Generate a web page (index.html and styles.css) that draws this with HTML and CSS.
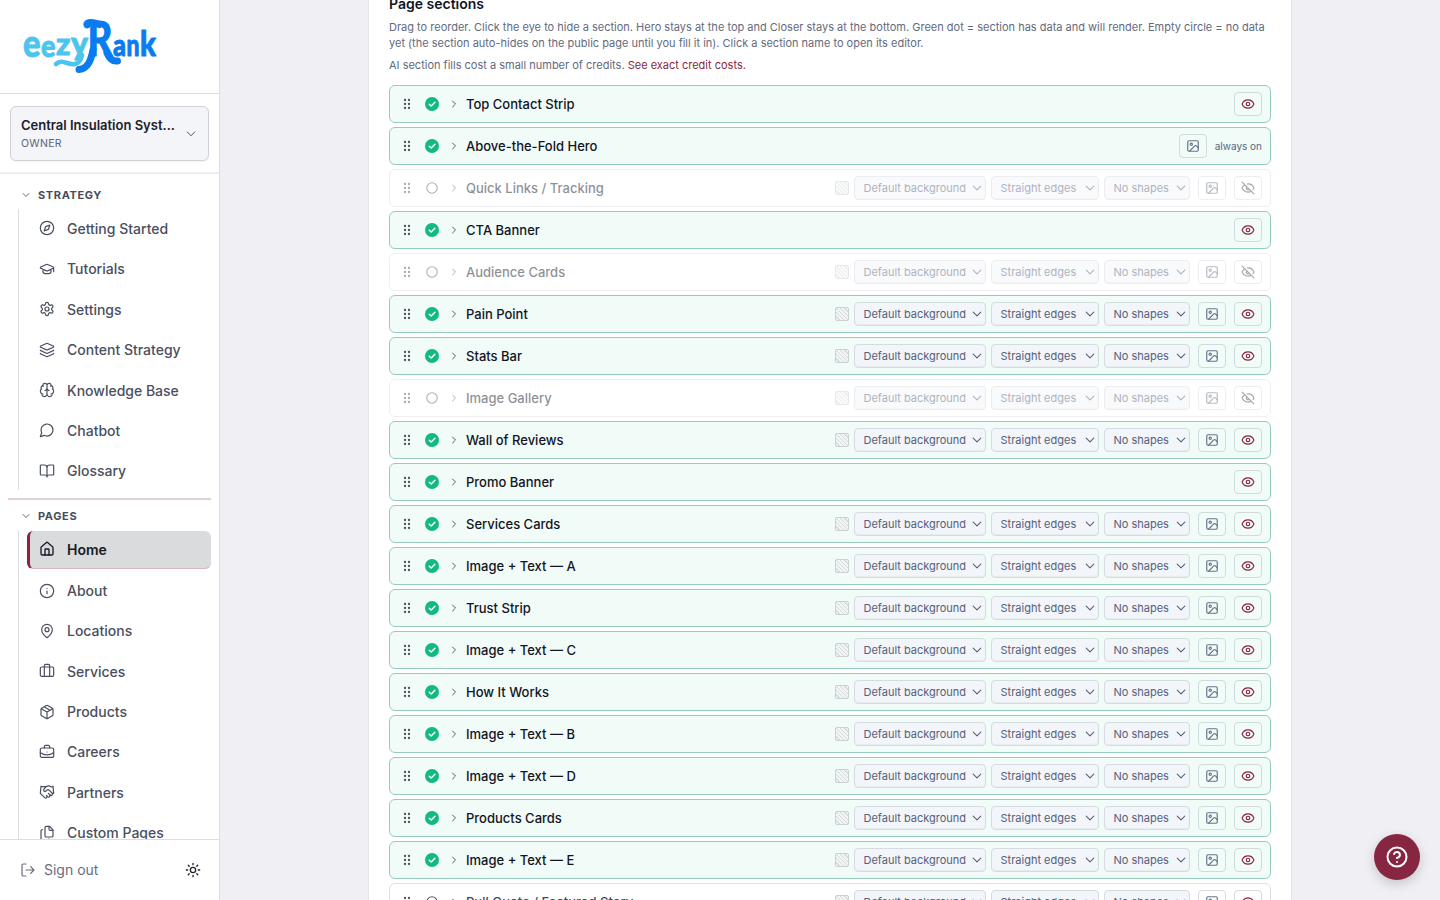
FILE: index.html
```html
<!DOCTYPE html>
<html lang="en">
<head>
<meta charset="utf-8">
<title>eezyRank</title>
<link rel="stylesheet" href="styles.css">
</head>
<body>
<div class="app">
  <aside class="sidebar">
    <div class="brand">
      <svg class="logo" width="140" height="60" viewBox="20 16 140 60" role="img" aria-label="eezyRank">
        <g class="logo-light">
          <text x="23" y="57" font-size="38" textLength="17.500" lengthAdjust="spacingAndGlyphs">e</text>
          <text x="41" y="56.500" font-size="31" textLength="14.500" lengthAdjust="spacingAndGlyphs">e</text>
          <text x="56" y="55" font-size="30" textLength="14.500" lengthAdjust="spacingAndGlyphs">z</text>
          <path class="swoosh-light" d="M56 64C62 58 69 66 75 64C79 63 81 60 82 55"/>
          <text x="71" y="54.500" font-size="33" textLength="17" lengthAdjust="spacingAndGlyphs">y</text>
        </g>
        <g class="logo-dark">
          <path class="swoosh" d="M87 25C86 22 92 21.500 99 24.500"/>
          <path class="swoosh" d="M107 53Q111 62 117.500 61"/>
          <path class="swoosh" d="M93 50C91 60 88 69 79 69.500"/>
          <text x="87.500" y="56" font-size="47" textLength="25" lengthAdjust="spacingAndGlyphs">R</text>
          <text x="113" y="55.500" font-size="30" textLength="13" lengthAdjust="spacingAndGlyphs">a</text>
          <text x="126.500" y="55.500" font-size="30" textLength="13" lengthAdjust="spacingAndGlyphs">n</text>
          <text x="140" y="56" font-size="34" textLength="16" lengthAdjust="spacingAndGlyphs">k</text>
        </g>
      </svg>
    </div>
    <div class="account">
      <div class="account-box">
        <div class="account-text"><div class="account-name">Central Insulation Syst...</div><div class="account-role">OWNER</div></div>
        <svg class="ico" width="12" height="12" viewBox="0 0 24 24"><path d="m4.500 8 7.500 7.500L19.500 8"/></svg>
      </div>
    </div>
    <nav class="nav" id="nav"></nav>
    <div class="foot">
      <svg class="ico thin" width="16" height="16" viewBox="0 0 24 24"><path d="M9 21H5a2 2 0 0 1-2-2V5a2 2 0 0 1 2-2h4M16 17l5-5-5-5M21 12H9"/></svg>
      <span class="signout">Sign out</span>
      <svg class="ico sun" width="16" height="16" viewBox="0 0 24 24"><circle cx="12" cy="12" r="4"/><path d="M12 2v2M12 20v2M4.930 4.930l1.410 1.410M17.660 17.660l1.410 1.410M2 12h2M20 12h2M6.340 17.660l-1.410 1.410M19.070 4.930l-1.410 1.410"/></svg>
    </div>
  </aside>
  <main class="main">
    <section class="card">
      <h2 class="title">Page sections</h2>
      <p class="help">Drag to reorder. Click the eye to hide a section. Hero stays at the top and Closer stays at the bottom. Green dot = section has data and will render. Empty circle = no data<br>yet (the section auto-hides on the public page until you fill it in). Click a section name to open its editor.</p>
      <p class="help credits">AI section fills cost a small number of credits. <a class="link">See exact credit costs.</a></p>
      <div class="rows" id="rows"></div>
    </section>
  </main>
  <button class="fab" aria-label="Help"><svg class="ico" width="24" height="24" viewBox="0 0 24 24"><circle cx="12" cy="12" r="9.500"/><path d="M9.090 9a3 3 0 0 1 5.830 1c0 2-3 3-3 3M12 17h.01"/></svg></button>
</div>
<script src="app.js"></script>
</body>
</html>
```
FILE: styles.css
```css
* { box-sizing: border-box; }
body { margin: 0; font-family: Inter, "Liberation Sans", sans-serif; background: #f0eff4; color: #11151f; }
.app { display: flex; height: 900px; overflow: hidden; }
.ico { display: block; flex: none; fill: none; stroke: currentColor; stroke-width: 2; stroke-linecap: round; stroke-linejoin: round; }
.thin { stroke-width: 1.800; }
.sidebar { width: 220px; flex: none; display: flex; flex-direction: column; background: #fff; border-right: 1px solid #dcdde0; }
.brand { height: 94px; flex: none; padding: 16px 20px; border-bottom: 1px solid #dcdde0; }
.logo { display: block; }
.logo text { font-family: Lato, sans-serif; font-weight: 900; stroke-width: .9; stroke-linejoin: round; }
.logo-light { fill: #4cc5ee; stroke: #4cc5ee; }
.logo-dark { fill: #0a7cf0; stroke: #0a7cf0; }
.logo .swoosh, .logo .swoosh-light { fill: none; stroke-linecap: round; stroke-linejoin: round; }
.logo .swoosh { stroke-width: 7; }
.logo .swoosh-light { stroke-width: 4.600; }
.account { height: 80px; flex: none; padding: 12px 10px; border-bottom: 2px solid #eeeef0; }
.account-box { height: 54.500px; display: flex; align-items: center; padding: 1px 11px 0 10px; border: 1px solid #cfd1d6; border-radius: 6px; background: #f3f5f9; color: #4b5160; box-shadow: 0 1px 1px #0000000a; }
.account-text { flex: 1; }
.account-name { font-size: 13px; line-height: 18px; font-weight: 600; color: #1c202a; white-space: nowrap; }
.account-role { margin-top: 1px; font-size: 10.500px; line-height: 17px; letter-spacing: .3px; color: #5d6373; }
.nav { flex: 1; overflow: hidden; padding: 11px 8px 0; }
.group-head { display: flex; align-items: center; gap: 7px; height: 20px; padding-left: 13px; font-size: 11px; font-weight: 700; letter-spacing: .62px; color: #474c5b; }
.group-items { display: flex; flex-direction: column; gap: 2px; margin: 4px 0 0 10px; padding-left: 8px; border-left: 1px solid #dcdde0; }
.strategy .group-items { padding-top: .3px; }
.strategy .item { height: 38.400px; }
.pages { margin-top: 7.500px; padding-top: 6px; border-top: 2px solid #e5cfd6; }
.pages .group-items { margin-top: 5px; }
.item { flex: none; height: 38.360px; display: flex; align-items: center; gap: 12px; padding-left: 12px; font-size: 14px; font-weight: 500; color: #4a4f60; }
.item.active { height: 38.800px; padding: 0 0 0 9px; border-left: 3px solid #8b2340; border-bottom: 1px solid #d8b6c0; border-radius: 6px; background: #dadbdd; color: #171a24; font-weight: 600; }
.foot { height: 61px; flex: none; display: flex; align-items: center; padding: 0 18px 1px 20px; border-top: 1px solid #dcdde0; color: #686d7e; }
.signout { flex: 1; margin-left: 8px; font-size: 14px; }
.sun { color: #20232c; }
.main { flex: 1; display: flex; justify-content: center; }
.card { width: 924px; height: 960px; flex: none; background: #fff; border: 1px solid #e2e2e7; border-top: 0; padding: 0 20px; }
.title { margin: -6px 0 0; font-size: 14px; line-height: 20px; font-weight: 600; }
.help { margin: 5px 0 0; font-size: 11px; line-height: 16px; color: #636a7d; white-space: nowrap; }
.credits { margin-top: 6px; }
.link { color: #8b1f3d; }
.rows { display: flex; flex-direction: column; gap: 4px; margin-top: 12px; }
.row { height: 38px; flex: none; display: flex; align-items: center; padding: 0 8px 0 9px; border: 1px solid #96ccbb; border-radius: 6px; background: #f1fbf8; }
.row.off, .row.empty { border-color: #dfe0e4; background: #fff; }
.row.off { border-color: #efeff1; }
.row.off > * { opacity: .48; }
.row.off .eye { color: #454b58; }
.grip { width: 16px; height: 16px; fill: #4a505c; }
.status { width: 14px; height: 14px; margin-left: 10px; }
.chev { margin-left: 9px; color: #4f5562; }
.name { flex: 1; margin-left: 6px; font-size: 13px; font-weight: 500; color: #11151f; white-space: nowrap; }
.empty .name { color: #454b58; }
.tools { display: flex; align-items: center; gap: 5px; margin-right: 8px; }
.swatch { width: 14px; height: 14px; border: 1px solid #cbd0d3; border-radius: 2px; background: repeating-linear-gradient(45deg, #f3f5f5 0 2px, #d5dadc 2px 3px); }
.select { height: 24px; display: flex; align-items: center; justify-content: space-between; padding: 0 1px 0 8.500px; border: 1px solid #d6dbe2; border-radius: 4px; background: #f2f5f9; font-size: 11px; color: #56607a; white-space: nowrap; box-shadow: inset 0 -1px 1px #0000000a; }
.bg { width: 132px; } .edges { width: 108px; } .shapes { width: 86px; }
.btn { width: 28px; height: 24px; display: flex; align-items: center; justify-content: center; border: 1px solid #cfdcdb; border-radius: 4px; color: #66758a; }
.off .btn, .empty .btn { border-color: #dadbe0; }
.eye { margin-left: 8px; color: #8b2340; }
.always { margin-left: 8px; font-size: 10px; color: #586780; }
.fab { position: absolute; left: 1374px; top: 834px; width: 46px; height: 46px; display: flex; align-items: center; justify-content: center; padding: 0; border: 0; border-radius: 50%; background: #872641; color: #fff; box-shadow: 0 4px 12px #0000002e; }
```
FILE: app.js
```js
const svg = (body, size, cls = '', sw = 2) =>
  `<svg class="ico ${cls}" width="${size}" height="${size}" viewBox="0 0 24 24" style="stroke-width:${sw}">${body}</svg>`;

const icons = {
  compass: '<circle cx="12" cy="12" r="10"/><path d="m16.240 7.760-1.800 5.410a2 2 0 0 1-1.270 1.270L7.760 16.240l1.800-5.410a2 2 0 0 1 1.270-1.270z"/>',
  cap: '<path d="M21.420 10.920a1 1 0 0 0-.02-1.840L12.830 5.180a2 2 0 0 0-1.660 0L2.600 9.080a1 1 0 0 0 0 1.830l8.570 3.910a2 2 0 0 0 1.660 0zM22 10v6M6 12.500V16a6 3 0 0 0 12 0v-3.500"/>',
  gear: '<path d="M12.220 2h-.44a2 2 0 0 0-2 2v.18a2 2 0 0 1-1 1.730l-.43.25a2 2 0 0 1-2 0l-.15-.08a2 2 0 0 0-2.730.73l-.22.38a2 2 0 0 0 .73 2.730l.15.1a2 2 0 0 1 1 1.720v.51a2 2 0 0 1-1 1.740l-.15.09a2 2 0 0 0-.73 2.730l.22.38a2 2 0 0 0 2.730.73l.15-.08a2 2 0 0 1 2 0l.43.25a2 2 0 0 1 1 1.730V20a2 2 0 0 0 2 2h.44a2 2 0 0 0 2-2v-.18a2 2 0 0 1 1-1.730l.43-.25a2 2 0 0 1 2 0l.15.08a2 2 0 0 0 2.730-.73l.22-.39a2 2 0 0 0-.73-2.730l-.15-.08a2 2 0 0 1-1-1.740v-.5a2 2 0 0 1 1-1.740l.15-.09a2 2 0 0 0 .73-2.730l-.22-.38a2 2 0 0 0-2.730-.73l-.15.08a2 2 0 0 1-2 0l-.43-.25a2 2 0 0 1-1-1.730V4a2 2 0 0 0-2-2z"/><circle cx="12" cy="12" r="3"/>',
  layers: '<path d="M12.830 2.180a2 2 0 0 0-1.660 0L2.600 6.080a1 1 0 0 0 0 1.830l8.580 3.910a2 2 0 0 0 1.660 0l8.580-3.900a1 1 0 0 0 0-1.830zM2 12a1 1 0 0 0 .58.91l8.600 3.910a2 2 0 0 0 1.650 0l8.580-3.900A1 1 0 0 0 22 12M2 17a1 1 0 0 0 .58.91l8.600 3.910a2 2 0 0 0 1.650 0l8.580-3.900A1 1 0 0 0 22 17"/>',
  brain: '<path d="M12 18V5M15 13a4.170 4.170 0 0 1-3-4 4.170 4.170 0 0 1-3 4M17.600 6.500A3 3 0 1 0 12 5a3 3 0 1 0-5.600 1.500M18 5.130a4 4 0 0 1 2.530 5.770M18 18a4 4 0 0 0 2-7.460M19.970 17.480A4 4 0 1 1 12 18a4 4 0 1 1-7.970-.52M6 18a4 4 0 0 1-2-7.460M6 5.130a4 4 0 0 0-2.530 5.770"/>',
  chat: '<path d="M7.900 20A9 9 0 1 0 4 16.100L2 22z"/>',
  book: '<path d="M12 7v14M3 18a1 1 0 0 1-1-1V4a1 1 0 0 1 1-1h5a4 4 0 0 1 4 4 4 4 0 0 1 4-4h5a1 1 0 0 1 1 1v13a1 1 0 0 1-1 1h-6a3 3 0 0 0-3 3 3 3 0 0 0-3-3z"/>',
  home: '<path d="M15 21v-8a1 1 0 0 0-1-1h-4a1 1 0 0 0-1 1v8"/><path d="M3 10a2 2 0 0 1 .71-1.530l7-6a2 2 0 0 1 2.580 0l7 6A2 2 0 0 1 21 10v9a2 2 0 0 1-2 2H5a2 2 0 0 1-2-2z"/>',
  info: '<circle cx="12" cy="12" r="10"/><path d="M12 16v-4M12 8h.01"/>',
  pin: '<path d="M20 10c0 4.990-5.540 10.190-7.400 11.800a1 1 0 0 1-1.200 0C9.540 20.190 4 14.990 4 10a8 8 0 0 1 16 0"/><circle cx="12" cy="10" r="3"/>',
  luggage: '<path d="M16 20V4a2 2 0 0 0-2-2h-4a2 2 0 0 0-2 2v16"/><rect x="2" y="6" width="20" height="14" rx="2"/>',
  box: '<path d="M11 21.730a2 2 0 0 0 2 0l7-4A2 2 0 0 0 21 16V8a2 2 0 0 0-1-1.730l-7-4a2 2 0 0 0-2 0l-7 4A2 2 0 0 0 3 8v8a2 2 0 0 0 1 1.730zM12 22V12M3.290 7 12 12l8.710-5M7.500 4.270l9 5.150"/>',
  briefcase: '<path d="M12 12h.01M16 6V4a2 2 0 0 0-2-2h-4a2 2 0 0 0-2 2v2M22 13a18.150 18.150 0 0 1-20 0"/><rect x="2" y="6" width="20" height="14" rx="2"/>',
  hands: '<path d="m11 17 2 2a1 1 0 1 0 3-3"/><path d="m14 14 2.500 2.500a1 1 0 1 0 3-3l-3.880-3.880a3 3 0 0 0-4.240 0l-.88.88a1 1 0 1 1-3-3l2.810-2.810a5.790 5.790 0 0 1 7.060-.87l.47.28a2 2 0 0 0 1.420.25L21 4M21 3l1 11h-2M3 3 2 14l6.500 6.500a1 1 0 1 0 3-3M3 4h8"/>',
  files: '<path d="M15 2a2 2 0 0 1 1.400.6l4 4A2 2 0 0 1 21 8v8a2 2 0 0 1-2 2h-8a2 2 0 0 1-2-2V4a2 2 0 0 1 2-2z"/><path d="M15 2v4a2 2 0 0 0 2 2h4M5 7a2 2 0 0 0-2 2v11a2 2 0 0 0 2 2h8a2 2 0 0 0 1.730-1"/>',
  down: '<path d="m5.500 8.800 6.500 6.500 6.500-6.500"/>',
  wideDown: '<path d="m5 8.500 7 7 7-7"/>',
  right: '<path d="m9 18 6-6-6-6"/>',
  image: '<rect x="3" y="3" width="18" height="18" rx="2"/><circle cx="9" cy="9" r="2"/><path d="m21 15-3.090-3.090a2 2 0 0 0-2.820 0L6 21"/>',
  eye: '<path d="M2.060 12.350a1 1 0 0 1 0-.7 10.750 10.750 0 0 1 19.880 0 1 1 0 0 1 0 .7 10.750 10.750 0 0 1-19.880 0"/><circle cx="12" cy="12" r="3"/>',
  eyeOff: '<path d="M10.730 5.080a10.740 10.740 0 0 1 11.210 6.570 1 1 0 0 1 0 .7 10.750 10.750 0 0 1-1.450 2.490M14.080 14.160a3 3 0 0 1-4.240-4.240M17.480 17.500a10.750 10.750 0 0 1-15.420-5.150 1 1 0 0 1 0-.7 10.750 10.750 0 0 1 4.450-5.140M2 2l20 20"/>'
};

const groups = [
  ['STRATEGY', 'strategy', [['compass', 'Getting Started'], ['cap', 'Tutorials'], ['gear', 'Settings'], ['layers', 'Content Strategy'], ['brain', 'Knowledge Base'], ['chat', 'Chatbot'], ['book', 'Glossary']]],
  ['PAGES', 'pages', [['home', 'Home'], ['info', 'About'], ['pin', 'Locations'], ['luggage', 'Services'], ['box', 'Products'], ['briefcase', 'Careers'], ['hands', 'Partners'], ['files', 'Custom Pages']]]
];
document.getElementById('nav').innerHTML = groups.map(([title, cls, items]) =>
  `<div class="${cls}"><div class="group-head">${svg(icons.wideDown, 10)}<span>${title}</span></div><div class="group-items">${
    items.map(([icon, label]) => `<div class="item${label === 'Home' ? ' active' : ''}">${svg(icons[icon], 16, '', label === 'Home' ? 2 : 1.8)}<span>${label}</span></div>`).join('')
  }</div></div>`).join('');

/* name, state, controls */
const sections = [
  ['Top Contact Strip', 'on', 'eye'], ['Above-the-Fold Hero', 'on', 'always'], ['Quick Links / Tracking', 'off', 'full'],
  ['CTA Banner', 'on', 'eye'], ['Audience Cards', 'off', 'full'], ['Pain Point', 'on', 'full'], ['Stats Bar', 'on', 'full'],
  ['Image Gallery', 'off', 'full'], ['Wall of Reviews', 'on', 'full'], ['Promo Banner', 'on', 'eye'], ['Services Cards', 'on', 'full'],
  ['Image + Text — A', 'on', 'full'], ['Trust Strip', 'on', 'full'], ['Image + Text — C', 'on', 'full'], ['How It Works', 'on', 'full'],
  ['Image + Text — B', 'on', 'full'], ['Image + Text — D', 'on', 'full'], ['Products Cards', 'on', 'full'], ['Image + Text — E', 'on', 'full'],
  ['Pull Quote / Featured Story', 'empty', 'full']
];
const grip = '<svg class="grip" viewBox="0 0 16 16">' + [4, 8, 12].map(y => `<circle cx="6" cy="${y}" r="1.150"/><circle cx="10" cy="${y}" r="1.150"/>`).join('') + '</svg>';
const select = (cls, label) => `<div class="select ${cls}"><span>${label}</span>${svg(icons.down, 14, '', 1.8)}</div>`;
const status = on => on
  ? '<svg class="status" viewBox="0 0 14 14"><circle cx="7" cy="7" r="7" fill="#12b981"/><path d="m4.200 7.200 2 1.900 3.700-3.900" fill="none" stroke="#fff" stroke-width="1.400" stroke-linecap="round" stroke-linejoin="round"/></svg>'
  : '<svg class="status" viewBox="0 0 14 14"><circle cx="7" cy="7" r="5.200" fill="none" stroke="#555c68" stroke-width="1.100"/></svg>';
document.getElementById('rows').innerHTML = sections.map(([name, state, kind]) => {
  const tools = kind === 'full' ? `<div class="tools"><span class="swatch"></span>${select('bg', 'Default background')}${select('edges', 'Straight edges')}${select('shapes', 'No shapes')}</div>` : '';
  const image = kind === 'eye' ? '' : `<span class="btn">${svg(icons.image, 14)}</span>`;
  const end = kind === 'always' ? '<span class="always">always on</span>' : `<span class="btn eye">${svg(icons[state === 'off' ? 'eyeOff' : 'eye'], 14)}</span>`;
  return `<div class="row ${state}">${grip}${status(state === 'on')}${svg(icons.right, 12, 'chev', 1.9)}<span class="name">${name}</span>${tools}${image}${end}</div>`;
}).join('');
```
